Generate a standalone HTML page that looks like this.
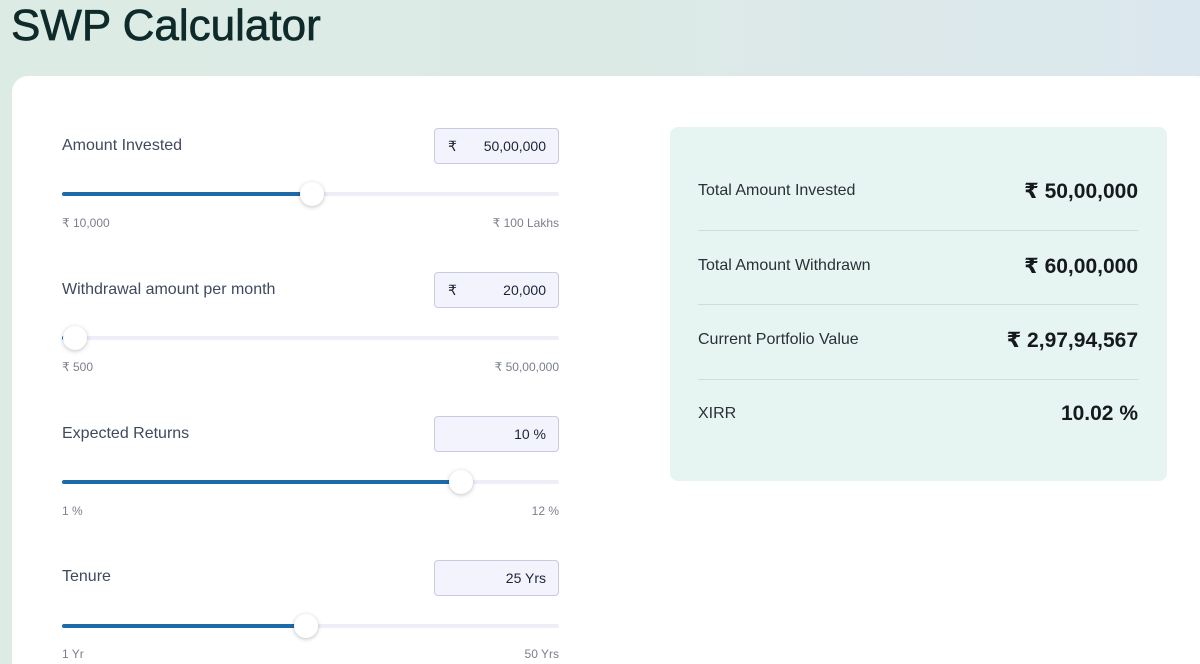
<!DOCTYPE html>
<html><head><style>
*{margin:0;padding:0;box-sizing:border-box}
html,body{width:1200px;height:664px;overflow:hidden}
body{font-family:"Liberation Sans","DejaVu Sans",sans-serif;background:linear-gradient(90deg,#dcece4 0%,#dceae6 50%,#dbe7ee 100%);position:relative}
h1{position:absolute;left:11px;top:1px;font-size:44px;font-weight:400;color:#0f2a2a;letter-spacing:0px;-webkit-text-stroke:0.7px #0f2a2a}
.card{position:absolute;left:12px;top:76px;width:1200px;height:620px;background:#fff;border-radius:16px}
.lbl{position:absolute;left:62px;font-size:16px;color:#3f4a5c}
.inp{position:absolute;left:434px;width:125px;height:36px;background:#f3f3fd;border:1px solid #c9cce0;border-radius:4px;font-size:14px;color:#1c2433}
.inp .r{position:absolute;left:13px;top:9px}
.inp .v{position:absolute;right:12px;top:9px}
.track{position:absolute;left:62px;width:497px;height:4px;background:#efedf8;border-radius:2px}
.fill{position:absolute;left:0;top:0;height:4px;background:#1d6aa8;border-radius:2px}
.th{position:absolute;top:-10px;width:24px;height:24px;border-radius:50%;background:#fff;box-shadow:0 1px 4px rgba(0,0,0,.25);margin-left:-12px}
.mm{position:absolute;font-size:12px;color:#7a808c}
.panel{position:absolute;left:670px;top:127px;width:497px;height:354px;background:#e6f5f2;border-radius:8px}
.row{position:absolute;left:28px;width:440px;font-size:16px;color:#2a2f38}
.row .val{position:absolute;right:0;top:-3px;font-size:21px;font-weight:700;color:#16191e}
.sep{position:absolute;left:28px;width:440px;height:1px;background:#cfdcd9}
</style></head><body>
<h1>SWP Calculator</h1>
<div class="card"></div>

<div class="lbl" style="top:137px">Amount Invested</div>
<div class="inp" style="top:128px"><span class="r">₹</span><span class="v">50,00,000</span></div>
<div class="track" style="top:192px"><div class="fill" style="width:250px"></div><div class="th" style="left:250px"></div></div>
<div class="mm" style="left:62px;top:216px">₹ 10,000</div>
<div class="mm" style="right:641px;top:216px">₹ 100 Lakhs</div>

<div class="lbl" style="top:281px">Withdrawal amount per month</div>
<div class="inp" style="top:272px"><span class="r">₹</span><span class="v">20,000</span></div>
<div class="track" style="top:336px"><div class="fill" style="width:13px"></div><div class="th" style="left:13px"></div></div>
<div class="mm" style="left:62px;top:360px">₹ 500</div>
<div class="mm" style="right:641px;top:360px">₹ 50,00,000</div>

<div class="lbl" style="top:425px">Expected Returns</div>
<div class="inp" style="top:416px"><span class="v">10 %</span></div>
<div class="track" style="top:480px"><div class="fill" style="width:399px"></div><div class="th" style="left:399px"></div></div>
<div class="mm" style="left:62px;top:504px">1 %</div>
<div class="mm" style="right:641px;top:504px">12 %</div>

<div class="lbl" style="top:568px">Tenure</div>
<div class="inp" style="top:560px"><span class="v">25 Yrs</span></div>
<div class="track" style="top:624px"><div class="fill" style="width:244px"></div><div class="th" style="left:244px"></div></div>
<div class="mm" style="left:62px;top:647px">1 Yr</div>
<div class="mm" style="right:641px;top:647px">50 Yrs</div>

<div class="panel">
<div class="row" style="top:55px">Total Amount Invested<span class="val">₹ 50,00,000</span></div>
<div class="sep" style="top:103px"></div>
<div class="row" style="top:130px">Total Amount Withdrawn<span class="val">₹ 60,00,000</span></div>
<div class="sep" style="top:177px"></div>
<div class="row" style="top:204px">Current Portfolio Value<span class="val">₹ 2,97,94,567</span></div>
<div class="sep" style="top:252px"></div>
<div class="row" style="top:278px">XIRR<span class="val">10.02 %</span></div>
</div>
</body></html>
